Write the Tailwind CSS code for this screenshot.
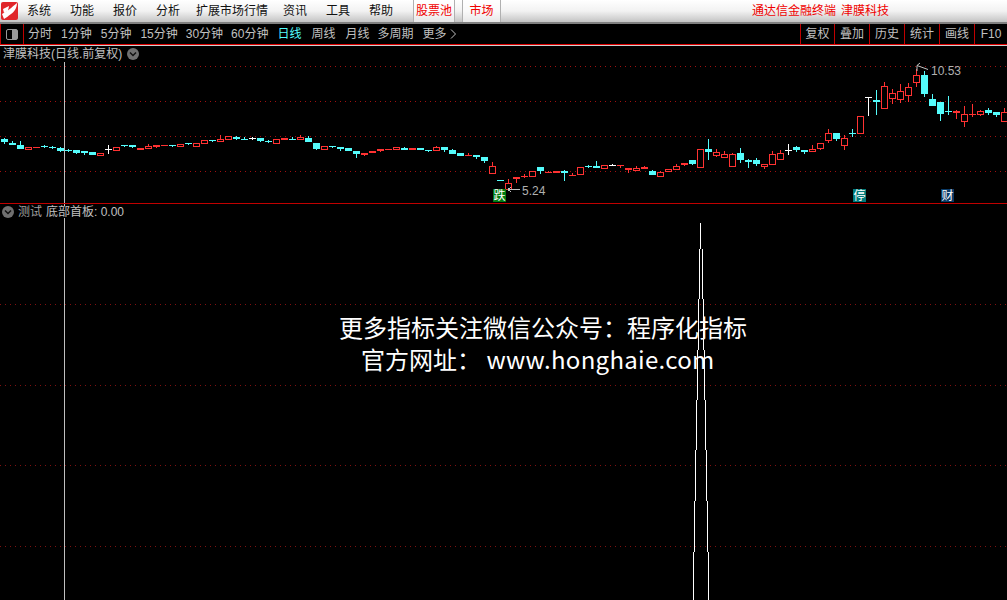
<!DOCTYPE html>
<html lang="zh">
<head>
  <meta charset="UTF-8">
  <title>通达信金融终端 津膜科技</title>
  <script src="https://cdn.jsdelivr.net/npm/@tailwindcss/browser@4"></script>
</head>
<body class="bg-black h-[600px] overflow-hidden flex flex-col text-[12px] leading-none font-['Liberation_Sans','Noto_Sans_CJK_SC',sans-serif]">
  <!-- Menu bar -->
  <header class="h-[24px] shrink-0 flex items-center bg-linear-to-b from-white via-[#f2f2f2] to-[#c4c4c4] border-b-2 border-[#808080] text-[#111]">
    <svg class="ml-[1px] w-[17px] h-[18px]" viewBox="0 0 17 18">
      <rect width="17" height="18" rx="2" fill="#e0262a"/>
      <path d="M1 12 L6 9 C8 8 11 5 16 1 C16 6 13 10 10 12 C7 14 5 16 3 17 Z" fill="#fff"/>
      <path d="M2 7 L8 4 L7 9 L3 11 Z" fill="#fff"/>
    </svg>
    <nav class="flex items-center ml-[9px]">
      <span>系统</span>
      <span class="ml-[19px]">功能</span>
      <span class="ml-[19px]">报价</span>
      <span class="ml-[19px]">分析</span>
      <span class="ml-[16px]">扩展市场行情</span>
      <span class="ml-[15px]">资讯</span>
      <span class="ml-[19px]">工具</span>
      <span class="ml-[19px]">帮助</span>
    </nav>
    <span class="ml-[20px] h-[22px] w-[42px] flex items-center justify-center bg-white/60 border-x border-[#b0b0b0] text-[#f00000]">股票池</span>
    <span class="ml-[7px] h-[22px] w-[39px] flex items-center justify-center bg-white/60 border-x border-[#b0b0b0] text-[#f00000]">市场</span>
    <span class="ml-auto mr-[118px] text-[#f00000] flex"><span>通达信金融终端</span><span class="ml-[5px]">津膜科技</span></span>
  </header>

  <!-- Period toolbar -->
  <div class="h-[20px] shrink-0 flex items-center text-[#c0c0c0]">
    <div class="w-[24px] h-full flex items-center justify-center border-x border-[#c00000]">
      <span class="w-[12px] h-[11px] rounded-[2px] border border-[#999] flex justify-end"><span class="w-[5px] bg-[#999]"></span></span>
    </div>
    <nav class="flex items-center ml-[4px]">
      <span>分时</span>
      <span class="ml-[9px]">1分钟</span>
      <span class="ml-[9px]">5分钟</span>
      <span class="ml-[9px]">15分钟</span>
      <span class="ml-[8px]">30分钟</span>
      <span class="ml-[8px]">60分钟</span>
      <span class="ml-[9px] text-[#54fcfc]">日线</span>
      <span class="ml-[10px]">周线</span>
      <span class="ml-[10px]">月线</span>
      <span class="ml-[8px]">多周期</span>
      <span class="ml-[9px]">更多</span>
      <svg class="ml-[3px] w-[7px] h-[10px]" viewBox="0 0 7 10" fill="none" stroke="#c0c0c0"><path d="M1 0.5 L5.5 5 L1 9.5"/></svg>
    </nav>
    <div class="ml-auto flex h-full">
      <span class="w-[34px] flex items-center justify-center border-l border-[#c00000]">复权</span>
      <span class="w-[35px] flex items-center justify-center border-l border-[#c00000]">叠加</span>
      <span class="w-[35px] flex items-center justify-center border-l border-[#c00000]">历史</span>
      <span class="w-[35px] flex items-center justify-center border-l border-[#c00000]">统计</span>
      <span class="w-[35px] flex items-center justify-center border-l border-[#c00000]">画线</span>
      <span class="w-[33px] flex items-center justify-center border-l border-[#c00000]">F10</span>
    </div>
  </div>
  <div class="h-[1px] shrink-0 bg-[#e00000]"></div>
  <div class="h-[1px] shrink-0 bg-[#d0d0d0]"></div>

  <!-- K-line pane -->
  <section class="relative h-[158px] shrink-0 border-b border-[#c00000]">
    <svg id="kline" class="absolute inset-0" width="1007" height="157" viewBox="0 46 1007 157" shape-rendering="crispEdges"></svg>
    <div class="absolute left-[3px] top-[2px] flex items-center bg-black text-[#c0c0c0]">
      <span>津膜科技(日线.前复权)</span>
      <svg class="ml-[5px] w-[12px] h-[12px]" viewBox="0 0 12 12"><circle cx="6" cy="6" r="6" fill="#707070"/><path d="M3 4.5 L6 7.5 L9 4.5" fill="none" stroke="#111" stroke-width="1.5"/></svg>
    </div>
    <span class="absolute left-[522px] top-[139px] text-[#b0b0b0]">5.24</span>
    <span class="absolute left-[931px] top-[19px] text-[#b0b0b0]">10.53</span>
    <span class="absolute left-[493px] top-[143px] w-[13px] h-[13px] flex items-center justify-center bg-[#007a10] text-white">跌</span>
    <span class="absolute left-[853px] top-[143px] w-[13px] h-[13px] flex items-center justify-center bg-[#007a7a] text-white">停</span>
    <span class="absolute left-[941px] top-[143px] w-[13px] h-[13px] flex items-center justify-center bg-[#0a3a66] text-white">财</span>
  </section>

  <!-- Indicator pane -->
  <section class="relative flex-1">
    <svg id="indicator" class="absolute inset-0" width="1007" height="396" viewBox="0 204 1007 396" shape-rendering="crispEdges"></svg>
    <div class="absolute left-[2px] top-[2px] flex items-center bg-black">
      <svg class="w-[12px] h-[12px]" viewBox="0 0 12 12"><circle cx="6" cy="6" r="6" fill="#707070"/><path d="M3 4.5 L6 7.5 L9 4.5" fill="none" stroke="#111" stroke-width="1.5"/></svg>
      <span class="ml-[4px] text-[#a0a0a0]">测试</span>
      <span class="ml-[4px] text-[#c0c0c0]">底部首板: 0.00</span>
    </div>
    <div class="absolute left-[339px] top-[107px] text-white text-[24px] leading-[32px] font-['Noto_Sans_CJK_SC',sans-serif]">
      <p class="whitespace-nowrap">更多指标关注微信公众号<span class="font-['Noto_Sans_CJK_TC',sans-serif]">：</span>程序化指标</p>
      <p class="whitespace-nowrap ml-[22px]">官方网址<span class="font-['Noto_Sans_CJK_TC',sans-serif]">：</span> <span class="tracking-[0.3px]">www.honghaie.com</span></p>
    </div>
  </section>

  <script>
    // [type, body top, body bottom, wick top, wick bottom]  c=cyan r=hollow red R=solid red w=white
    const candles = [
      ['c',139,142,138,144],['c',143,145,141,145],['c',145,149,141,149],['r',147,150],['R',147,148],
      ['c',146,147,145,148],['c',147,148,146,149],['c',148,151,147,152],['c',150,151,149,152],['c',150,153,150,154],
      ['c',151,153,151,155],['c',152,155],['r',153,156],['w',149,150,145,154],['r',147,151],
      ['c',145,146,145,147],['c',145,147,145,148],['R',148,150],['r',146,149,144,149],['R',145,147,145,148],
      ['R',145,146],['c',145,146,145,147],['r',144,147],['c',143,144,143,145],['r',143,147],
      ['r',140,144],['c',140,141,140,142],['r',139,142,135,142],['r',136,140],['c',137,139,136,140],
      ['c',139,140,137,140],['w',138,139,137,140],['c',138,141,138,142],['c',141,142,140,143],['r',139,144],
      ['R',138,140],['c',139,140,137,140],['r',137,140,135,140],['c',138,142,136,142],['c',143,149,143,150],
      ['r',146,150],['c',146,147,146,148],['c',147,149,147,151],['c',148,151],['c',151,154,151,158],
      ['R',153,155,153,156],['R',151,153],['R',149,151,149,152],['R',149,150],['r',147,150],
      ['c',148,150,147,150],['R',148,150],['c',148,150],['c',150,151,150,152],['r',147,151,146,151],
      ['c',147,150,147,152],['c',150,154,149,154],['c',153,156],['R',155,156,153,156],['c',155,157,155,159],
      ['c',157,161,157,163],['r',166,174,162,174],['c',180,181],['r',183,190,179,190],['R',177,179,177,183],
      ['R',176,177,174,178],['r',171,177],['c',167,171,167,174],['R',172,173,171,173],['R',171,173],
      ['c',171,173,170,181],['R',175,176,173,176],['r',167,175],['c',166,167,165,168],['c',166,168,161,168],
      ['r',165,169],['w',165,166,164,166],['R',165,166,165,168],['R',168,170,168,173],['r',168,171,166,171],
      ['R',167,169,166,169],['c',171,175,170,175],['r',172,177,171,177],['r',169,172],['r',166,170,164,170],
      ['R',163,165,163,166],['c',160,164,160,165],['r',149,168],['c',149,152,139,160],['r',152,156,149,157],
      ['r',154,158,151,158],['r',154,167,153,167],['c',153,160,148,163],['c',160,162,159,168],['c',160,164,158,166],
      ['r',164,167,164,169],['r',154,165,151,165],['r',153,160,150,160],['w',150,151,144,155],['c',147,150,146,152],
      ['c',150,152,150,154],['r',149,152,145,152],['r',143,149,143,150],['r',133,141,129,143],['c',133,139,133,141],
      ['r',138,146,135,150],['c',133,134,129,137],['r',116,134],['w',97,98,97,116],['c',100,102,90,115],
      ['r',86,109,82,109],['r',93,99,89,104],['r',91,100,84,103],['r',87,96,83,102],['r',75,83,69,87],
      ['c',75,94,71,97],['c',99,106,94,106],['c',102,114,102,121],['c',111,112,96,115],['R',111,113,110,119],
      ['r',114,122,106,127],['R',114,115,104,117],['r',111,115,110,116],['c',110,113,108,115],['c',112,115,112,117],
      ['r',112,122,108,122]
    ];
    const colours = { c: '#54fcfc', r: '#ff3232', R: '#ff3232', w: '#ffffff' };

    function hDots(y, colour) {
      return `<line x1="0" x2="1007" y1="${y + 0.5}" y2="${y + 0.5}" stroke="${colour}" stroke-dasharray="1 4"/>`;
    }

    function candle(item, index) {
      const [type, top, bottom, wickTop, wickBottom] = item;
      const x = 4 + index * 8;
      const colour = colours[type];
      let out = '';
      if (wickTop !== undefined) {
        out += `<rect x="${x}" y="${wickTop}" width="1" height="${wickBottom - wickTop}" fill="${colour}"/>`;
      }
      if (type === 'r') {
        out += `<rect x="${x - 2.5}" y="${top + 0.5}" width="6" height="${bottom - top - 1}" fill="#000" stroke="${colour}"/>`;
      } else {
        out += `<rect x="${x - 3}" y="${top}" width="7" height="${bottom - top}" fill="${colour}"/>`;
      }
      return out;
    }

    // K-line pane
    let kline = [66, 101, 136, 171].map(y => hDots(y, '#a01010')).join('');
    kline += '<rect x="64" y="62" width="1" height="141" fill="#c0c0c0"/>';
    kline += candles.map(candle).join('');
    kline += '<g fill="none" stroke="#c0c0c0"><path d="M508 189.5H520M508 189.5L511 187M508 189.5L511 192"/><path d="M917 65.5L928 69.5M917 65.5L920 63M917 65.5V71" shape-rendering="auto"/></g>';
    document.getElementById('kline').innerHTML = kline;

    // Indicator pane: stepped spike
    const steps = [[249, 299, 699, 702], [299, 350, 698, 703], [350, 400, 697, 704], [400, 450, 696, 705], [450, 501, 695, 706], [501, 552, 694, 707], [552, 600, 693, 708]];
    let ind = [304, 385, 465, 546].map(y => hDots(y, '#801010')).join('');
    ind += '<rect x="64" y="204" width="1" height="396" fill="#c0c0c0"/>';
    ind += '<rect x="700" y="223" width="1" height="26" fill="#fff"/>';
    steps.forEach(([y1, y2, left, right]) => {
      ind += `<rect x="${left}" y="${y1}" width="1" height="${y2 - y1}" fill="#fff"/><rect x="${right}" y="${y1}" width="1" height="${y2 - y1}" fill="#fff"/>`;
    });
    document.getElementById('indicator').innerHTML = ind;
  </script>
</body>
</html>
